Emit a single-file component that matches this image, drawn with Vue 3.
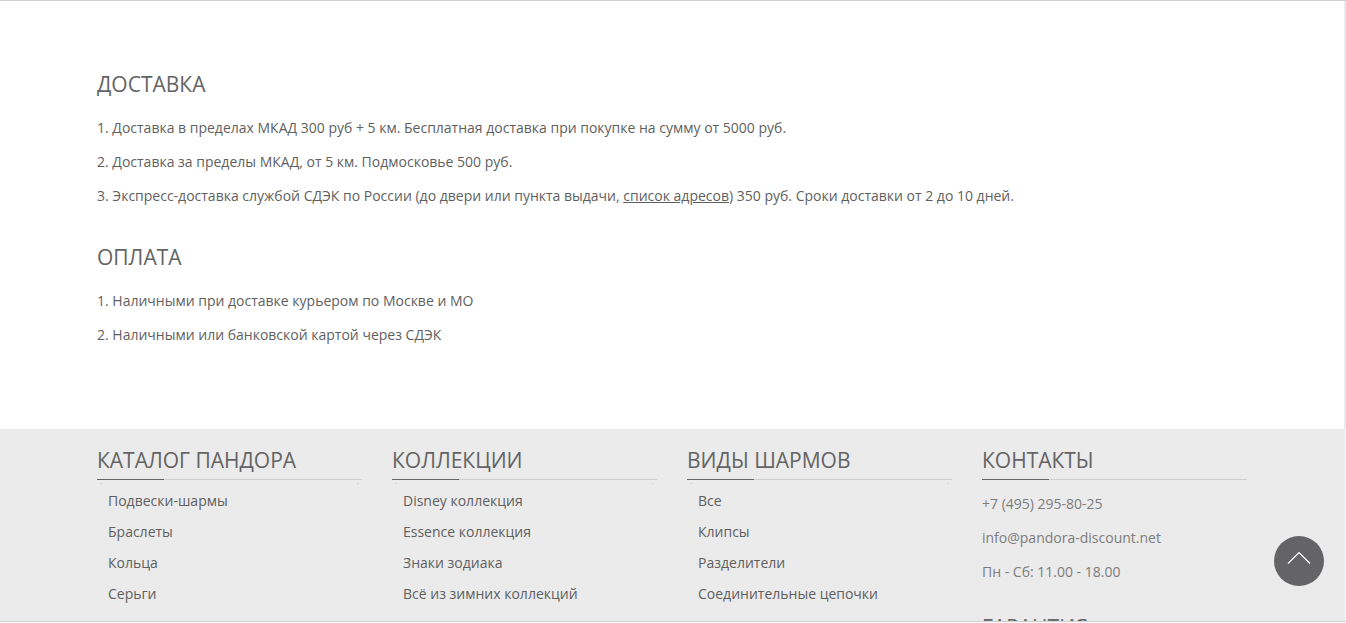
<template>
  <div class="page">
    <main class="content">
      <div class="container">
        <section v-for="section in sections" :key="section.title" class="info">
          <h2 class="info-title">{{ section.title }}</h2>
          <p v-for="(item, index) in section.items" :key="index">
            {{ index + 1 }}. {{ item.text }}<template v-if="item.link"><a href="#">{{ item.link }}</a>{{ item.after }}</template>
          </p>
        </section>
      </div>
    </main>

    <footer class="footer">
      <div class="container footer-grid">
        <nav v-for="menu in menus" :key="menu.title" :aria-label="menu.title">
          <h3 class="footer-title">{{ menu.title }}</h3>
          <ul class="footer-menu">
            <li v-for="link in menu.links" :key="link"><a href="#">{{ link }}</a></li>
          </ul>
        </nav>
        <div>
          <h3 class="footer-title">КОНТАКТЫ</h3>
          <div class="contacts">
            <p>+7 (495) 295-80-25</p>
            <p>info@pandora-discount.net</p>
            <p>Пн - Сб: 11.00 - 18.00</p>
          </div>
          <h3 class="footer-title">ГАРАНТИЯ</h3>
        </div>
      </div>
    </footer>

    <button type="button" class="to-top" aria-label="Наверх" @click="scrollToTop">
      <svg viewBox="0 0 24 14" width="24" height="14" fill="none" stroke="#fff" stroke-width="1.2">
        <path d="M1 12.5 12 1.5 23 12.5" />
      </svg>
    </button>
  </div>
</template>

<script setup>
const sections = [
  {
    title: 'ДОСТАВКА',
    items: [
      { text: 'Доставка в пределах МКАД 300 руб + 5 км. Бесплатная доставка при покупке на сумму от 5000 руб.' },
      { text: 'Доставка за пределы МКАД, от 5 км. Подмосковье 500 руб.' },
      {
        text: 'Экспресс-доставка службой СДЭК по России (до двери или пункта выдачи, ',
        link: 'список адресов',
        after: ') 350 руб. Сроки доставки от 2 до 10 дней.',
      },
    ],
  },
  {
    title: 'ОПЛАТА',
    items: [
      { text: 'Наличными при доставке курьером по Москве и МО' },
      { text: 'Наличными или банковской картой через СДЭК' },
    ],
  },
];

const menus = [
  { title: 'КАТАЛОГ ПАНДОРА', links: ['Подвески-шармы', 'Браслеты', 'Кольца', 'Серьги'] },
  { title: 'КОЛЛЕКЦИИ', links: ['Disney коллекция', 'Essence коллекция', 'Знаки зодиака', 'Всё из зимних коллекций'] },
  { title: 'ВИДЫ ШАРМОВ', links: ['Все', 'Клипсы', 'Разделители', 'Соединительные цепочки'] },
];

function scrollToTop() {
  window.scrollTo({ top: 0, behavior: 'smooth' });
}
</script>

<style>
body {
  margin: 0;
}
</style>

<style scoped>
.page {
  display: flex;
  flex-direction: column;
  height: calc(100vh - 1px);
  box-sizing: border-box;
  overflow: hidden;
  border-top: 1px solid #d0d0d0;
  border-bottom: 1px solid #d0d0d0;
  background: #fff;
  color: #5f5f5f;
  font-family: "Open Sans", "Noto Sans", sans-serif;
  font-size: 14px;
  line-height: 24px;
}

.container {
  max-width: 1150px;
  margin: 0 auto;
}

.content {
  flex: none;
  padding: 66px 96px 72px;
  border-right: 2px solid #ebebeb;
}

.info {
  margin-bottom: 32px;
}

.info:last-child {
  margin-bottom: 10px;
}

.info-title,
.footer-title {
  margin: 0;
  color: #646464;
  font-size: 21px;
  font-weight: 400;
  line-height: 35px;
}

.info-title {
  margin-bottom: 14px;
}

p {
  margin: 0 0 10px;
}

a {
  color: inherit;
}

.footer {
  flex: 1;
  min-height: 0;
  padding: 14px 97px 0 96px;
  border-right: 1px dotted #fff;
  background: #ebebeb;
}

.footer-grid {
  display: grid;
  grid-template-columns: repeat(4, 1fr);
  gap: 30px;
}

.footer-title {
  position: relative;
  padding-bottom: 1px;
  border-bottom: 1px solid #d0d0d0;
}

.footer-title::after {
  content: "";
  position: absolute;
  bottom: -1px;
  left: 0;
  width: 67px;
  height: 1px;
  background: #646464;
}

.footer-menu {
  position: relative;
  margin: 0;
  padding: 5px 0 0 11px;
  list-style: none;
  line-height: 31px;
}

/* faint corner ticks under the title rule */
.footer-menu::before,
.footer-menu::after {
  content: "";
  position: absolute;
  top: 3px;
  width: 2px;
  height: 1px;
  background: #d0d0d0;
}

.footer-menu::before {
  left: 3px;
  transform: rotate(-45deg);
}

.footer-menu::after {
  right: 3px;
  transform: rotate(45deg);
}

.footer-menu a {
  text-decoration: none;
}

.contacts {
  padding: 12px 0 16px;
  color: #7d7d7d;
}

.to-top {
  position: fixed;
  right: 22px;
  bottom: 37px;
  display: flex;
  align-items: center;
  justify-content: center;
  width: 50px;
  height: 50px;
  padding: 0 0 7px;
  border: 0;
  border-radius: 50%;
  background: #646466;
  cursor: pointer;
}
</style>
